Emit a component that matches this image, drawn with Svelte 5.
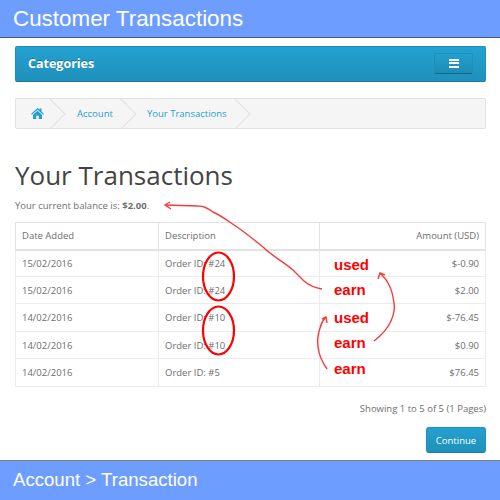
<script>
  const rows = [
    { date: "15/02/2016", desc: "Order ID: #24", amount: "$-0.90" },
    { date: "15/02/2016", desc: "Order ID: #24", amount: "$2.00" },
    { date: "14/02/2016", desc: "Order ID: #10", amount: "$-76.45" },
    { date: "14/02/2016", desc: "Order ID: #10", amount: "$0.90" },
    { date: "14/02/2016", desc: "Order ID: #5", amount: "$76.45" }
  ];
  // hand written notes that sit over the table
  const notes = [
    { text: "used", top: 256 },
    { text: "earn", top: 281 },
    { text: "used", top: 309 },
    { text: "earn", top: 334 },
    { text: "earn", top: 360 }
  ];
</script>

<div class="page">
  <header class="banner top">Customer Transactions</header>

  <main class="content">
    <nav class="menu">
      <span class="menu-title">Categories</span>
      <button class="toggle" aria-label="menu">
        <span></span><span></span><span></span>
      </button>
    </nav>

    <ul class="crumbs">
      <li class="home">
        <svg width="13" height="11" viewBox="0 0 26 22">
          <path d="M13 0 L17 3.6 V1 H21 V7.2 L26 11.8 L24.4 13.6 L13 3.4 L1.6 13.6 L0 11.8 Z M13 5.6 L22 13.6 V22 H15.5 V15.5 H10.5 V22 H4 V13.6 Z" fill="#23a1d1" />
        </svg>
      </li>
      <li class="account">Account</li>
      <li class="current">Your Transactions</li>
    </ul>

    <h1>Your Transactions</h1>
    <p class="balance">Your current balance is: <b>$2.00</b>.</p>

    <table>
      <thead>
        <tr>
          <th class="c1">Date Added</th>
          <th class="c2">Description</th>
          <th class="num">Amount (USD)</th>
        </tr>
      </thead>
      <tbody>
        {#each rows as row}
          <tr>
            <td>{row.date}</td>
            <td>{row.desc}</td>
            <td class="num">{row.amount}</td>
          </tr>
        {/each}
      </tbody>
    </table>

    <p class="showing">Showing 1 to 5 of 5 (1 Pages)</p>
    <div class="actions">
      <button class="continue">Continue</button>
    </div>
  </main>

  <footer class="banner bottom">Account &gt; Transaction</footer>

  {#each notes as note}
    <span class="note" style="top: {note.top}px">{note.text}</span>
  {/each}

  <svg class="marks" width="500" height="500" viewBox="0 0 500 500" fill="none" stroke="#f93a3a">
    <ellipse cx="218.5" cy="276.5" rx="15.5" ry="24" stroke="#f00" stroke-width="2.2" />
    <ellipse cx="218.5" cy="330.5" rx="15.5" ry="24" stroke="#f00" stroke-width="2.2" />
    <path d="M322 289 C315 288 310 286 304 281 L293 270 C284 262 272 256 263 247 C254 240 246 233 237 227 C228 221 222 216 213 212 C207 208 204 206 198 206 L165 205" stroke-width="1.4" />
    <path d="M170 202 L165 205 L171 209" stroke-width="1.4" />
    <path d="M374 341 C383 334 388 328 391 321 C394 314 395 308 394 303 C393 295 391 288 388 283 C386 279 383 276 380 273" stroke-width="1.4" />
    <path d="M378 279 L380 273 L385 275" stroke-width="1.4" />
    <path d="M327 369 C322 362 319 355 318 347 C317 340 318 334 320 328 C321 324 323 320 326 317" stroke-width="1.4" />
    <path d="M322 319 L326 317 L327 323" stroke-width="1.4" />
  </svg>
</div>

<style>
  :global(body) {
    margin: 0;
    background: #fff;
  }

  .page {
    position: relative;
    width: 500px;
    height: 500px;
    overflow: hidden;
    display: flex;
    flex-direction: column;
    font-family: "Open Sans", sans-serif;
    font-size: 9.5px;
    color: #6e6e6e;
  }

  .banner {
    flex-shrink: 0;
    background: #6d9dff;
    color: #fff;
    font-family: "Liberation Sans", Arial, sans-serif;
    padding-left: 13px;
    box-sizing: border-box;
  }

  .top {
    height: 38px;
    font-size: 22.4px;
    line-height: 37px;
    border-bottom: 1px solid #3f5a8c;
  }

  .bottom {
    height: 40px;
    font-size: 18.6px;
    line-height: 37px;
    border-top: 1px solid #7f7f7f;
  }

  .content {
    flex: 1;
    min-height: 0;
    padding: 8px 14px 0 15px;
  }

  .menu {
    height: 36px;
    box-sizing: border-box;
    display: flex;
    align-items: center;
    justify-content: space-between;
    padding: 0 12px 2px 12px;
    background: linear-gradient(to bottom, #23a1d1, #1f90bb);
    border: 1px solid #1f90bb;
    border-bottom-color: #1a7a9f;
    border-radius: 2px;
  }

  .menu-title {
    color: #fff;
    font-size: 12.5px;
    font-weight: 700;
    text-shadow: 0 -1px 0 rgba(0, 0, 0, 0.25);
  }

  .toggle {
    width: 39px;
    height: 21px;
    padding: 0;
    display: flex;
    flex-direction: column;
    align-items: center;
    justify-content: center;
    gap: 1.5px;
    background: linear-gradient(to bottom, #22a0cf, #1d8cb6);
    border: 1px solid #1f8fba;
    border-bottom-color: #16698a;
    border-radius: 2px;
  }

  .toggle span {
    width: 10px;
    height: 2px;
    background: #fff;
  }

  .crumbs {
    list-style: none;
    margin: 16px 0 0;
    padding: 0;
    height: 31px;
    box-sizing: border-box;
    display: flex;
    align-items: center;
    background: #f5f5f5;
    border: 1px solid #e2e2e2;
    border-radius: 2px;
    overflow: hidden;
    color: #23a1d1;
  }

  .crumbs li {
    position: relative;
    height: 100%;
    box-sizing: border-box;
    display: flex;
    align-items: center;
  }

  .crumbs li::after {
    content: "";
    position: absolute;
    right: -7px;
    top: 4px;
    width: 21px;
    height: 21px;
    border-top: 1px solid #e2e2e2;
    border-right: 1px solid #e2e2e2;
    transform: rotate(45deg);
  }

  .home {
    width: 38px;
    padding-left: 15px;
  }

  .account {
    width: 71px;
    padding-left: 23px;
  }

  .current {
    width: 114px;
    padding-left: 22px;
  }

  h1 {
    margin: 28px 0 0;
    font-size: 26px;
    font-weight: 400;
    line-height: 37px;
    color: #444;
  }

  .balance {
    margin: 5px 0 0;
    line-height: 13px;
  }

  .balance b {
    font-weight: 700;
  }

  table {
    width: 471px;
    margin-top: 10px;
    border-collapse: collapse;
    table-layout: fixed;
    border: 1px solid #e2e2e2;
  }

  th,
  td {
    padding: 0 6px;
    box-sizing: border-box;
    border: 1px solid #e2e2e2;
    font-weight: 400;
    text-align: left;
  }

  td {
    height: 27px;
    border-color: #ececec;
  }

  tr:nth-child(3) td,
  tr:nth-child(5) td {
    height: 28px;
  }

  th {
    height: 27px;
    border-bottom-width: 2px;
  }

  .c1 {
    width: 143px;
  }

  .c2 {
    width: 161px;
  }

  th.num,
  td.num {
    text-align: right;
  }

  .showing {
    margin: 15px 0 0;
    text-align: right;
    line-height: 13px;
  }

  .actions {
    margin-top: 12px;
    display: flex;
    justify-content: flex-end;
  }

  .continue {
    width: 60px;
    height: 26px;
    padding: 0;
    font-family: inherit;
    font-size: 9.5px;
    color: #fff;
    background: linear-gradient(to bottom, #23a1d1, #1f90bb);
    border: 1px solid #1f90bb;
    border-bottom-color: #1a7a9f;
    border-radius: 3px;
  }

  .note {
    position: absolute;
    left: 334px;
    color: #f00;
    font-family: "Liberation Sans", Arial, sans-serif;
    font-size: 15px;
    font-weight: 700;
    line-height: 17px;
  }

  .marks {
    position: absolute;
    left: 0;
    top: 0;
    pointer-events: none;
  }
</style>
